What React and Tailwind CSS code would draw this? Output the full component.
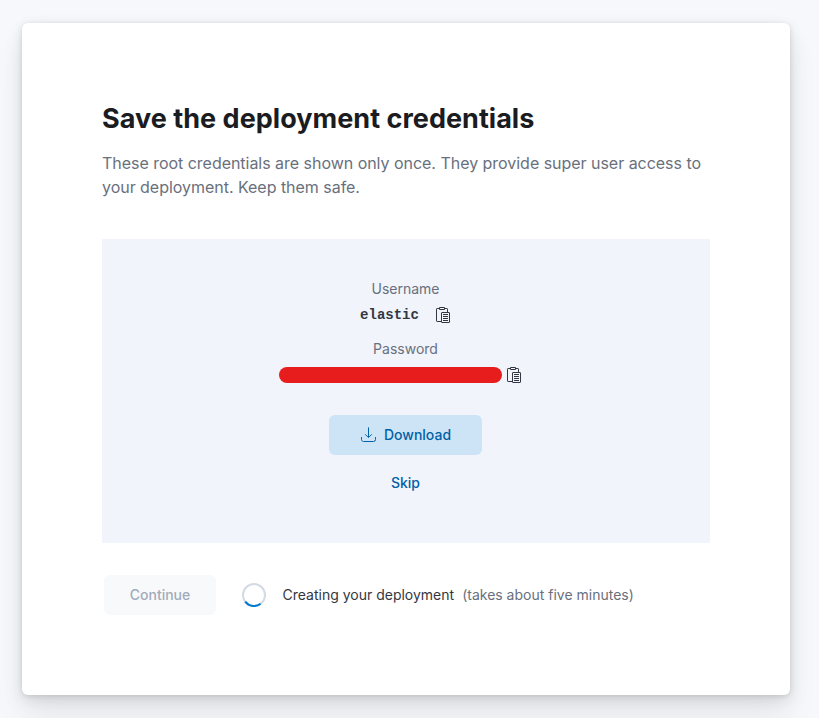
function CopyIcon() {
  return (
    <svg width="16" height="16" viewBox="0 0 16 16" fill="none" stroke="#343741" className="block shrink-0">
      <path d="M4 1.5H2.1a.6.6 0 0 0-.6.6v11.8a.6.6 0 0 0 .6.6H6M10 1.5h1.9a.6.6 0 0 1 .6.6V5" />
      <path d="M4.5 .5h5v2h-5z" />
      <rect x="6.5" y="5.5" width="8" height="10" rx=".4" />
      <path d="M8 7.5h5M8 9.5h5M8 11.5h5M8 13.5h5" />
    </svg>
  );
}

function DownloadIcon() {
  return (
    <svg width="16" height="16" viewBox="0 0 16 16" fill="none" stroke="#0061a6" strokeLinecap="round" className="block shrink-0">
      <path d="M7.5 .8v9.4M4.5 7.6l2.3 2.3c.4.4 1 .4 1.4 0l2.3-2.3" />
      <path d="M.5 10.5v2c0 1.1.9 2 2 2h10a2 2 0 0 0 2-2v-2" />
    </svg>
  );
}

function Spinner() {
  return (
    <svg width="24" height="24" viewBox="0 0 24 24" fill="none" strokeWidth="2" className="block shrink-0">
      <circle cx="12" cy="12" r="11" stroke="#d3dae6" />
      <path d="M3.2 18.6A11 11 0 0 0 18.6 20.8" stroke="#0079d0" />
    </svg>
  );
}

export default function App() {
  return (
    <div className="h-[718px] w-[819px] overflow-hidden bg-[#f7f8fc] pl-[22px] pt-[23px] font-['Inter',sans-serif]">
      <main className="h-[672px] w-[768px] rounded-md bg-white px-20 pt-20 shadow-[0_1px_5px_rgba(0,0,0,0.1),0_3.6px_13px_rgba(0,0,0,0.07),0_8.4px_23px_rgba(0,0,0,0.06),0_23px_35px_rgba(0,0,0,0.05)]">
        <h1 className="text-[27px] font-bold leading-8 tracking-[0.03px] text-[#1a1c21]">Save the deployment credentials</h1>
        <p className="mt-4 text-base leading-6 tracking-[-0.03px] text-[#69707d]">
          These root credentials are shown only once. They provide super user access to
          <br />
          your deployment. Keep them safe.
        </p>
        <section className="mt-10 flex h-[304px] flex-col items-center bg-[#f1f4fb] pt-10 text-sm leading-5">
          <div className="mr-px text-[#69707d]">Username</div>
          <div className="mt-1.5 flex h-5 items-center gap-4 pr-px">
            <code className="font-['Liberation_Mono',monospace] text-sm font-bold leading-4 text-[#343741]">elastic</code>
            <CopyIcon />
          </div>
          <div className="mr-px mt-3.5 text-[#69707d]">Password</div>
          <div className="mt-1.5 flex h-5 items-center gap-1 pr-3">
            <div className="h-4 w-[223px] rounded-full bg-[#e71d1d]" />
            <CopyIcon />
          </div>
          <button className="mr-px mt-[30px] flex h-10 w-[153px] items-center justify-center gap-[7px] rounded-md bg-[#cce4f5] pl-px font-medium text-[#0061a6]">
            <DownloadIcon />
            Download
          </button>
          <button className="mr-px mt-[18px] font-medium text-[#0061a6]">Skip</button>
        </section>
        <footer className="mt-8 flex h-10 items-center pl-0.5 text-sm">
          <button className="h-10 w-28 rounded-md bg-[#f8f9fb] font-medium text-[#a2abba]">Continue</button>
          <div className="ml-[26px]">
            <Spinner />
          </div>
          <span className="ml-4 pl-[0.5px] text-[#343741]">Creating your deployment</span>
          <span className="ml-2 text-[#69707d]">(takes about five minutes)</span>
        </footer>
      </main>
    </div>
  );
}
